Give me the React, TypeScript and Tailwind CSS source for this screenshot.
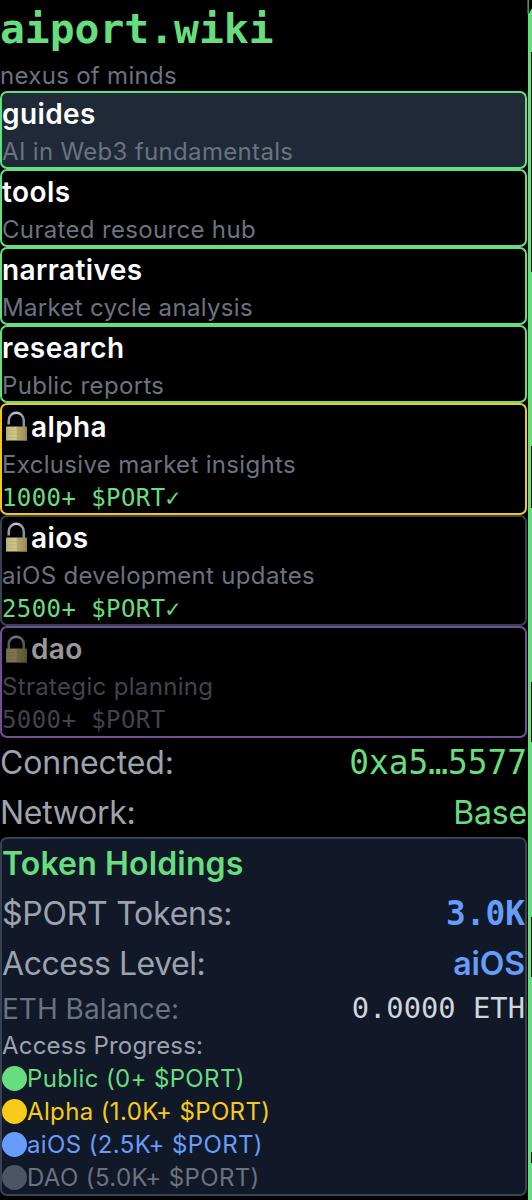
import type { ReactNode } from 'react';

function Lock({ open }: { open: boolean }) {
  return (
    <svg width="29" height="34" viewBox="0 0 29 34" className="mb-[3px] shrink-0">
      <defs>
        <linearGradient id="brass" x1="0" x2="1" y1="0" y2="0">
          <stop offset="0" stopColor="#b5aa72" />
          <stop offset="0.12" stopColor="#c5bb82" />
          <stop offset="0.48" stopColor="#cfc688" />
          <stop offset="0.55" stopColor="#b3a96c" />
          <stop offset="0.85" stopColor="#a1975d" />
          <stop offset="1" stopColor="#8c834f" />
        </linearGradient>
        <linearGradient id="steel" x1="0" x2="1" y1="0" y2="0">
          <stop offset="0" stopColor="#8e9cb0" />
          <stop offset="0.5" stopColor="#c3cad5" />
          <stop offset="1" stopColor="#8290a6" />
        </linearGradient>
      </defs>
      <path
        d={open ? 'M6.7 15.5V11.8C6.7 1.2 21.8 1.2 21.8 11.8V18' : 'M6.7 19V13.2C6.7 3.4 21.8 3.4 21.8 13.2V19'}
        fill="none"
        stroke="url(#steel)"
        strokeWidth="2.5"
      />
      <rect x="4" y="17.5" width="21" height="14.5" rx="0.8" fill="url(#brass)" />
      <path d="M4.5 21.5h20M4.5 25h20M4.5 28.5h20" stroke="#a59b62" strokeOpacity="0.6" strokeWidth="0.6" />
      <path d="M4.3 31.5h20.4" stroke="#70683f" strokeWidth="1" />
    </svg>
  );
}

type CardProps = {
  title: string;
  text: string;
  className: string;
  lock?: 'open' | 'closed';
  children?: ReactNode;
};

function Card({ title, text, className, lock, children }: CardProps) {
  return (
    <div className={`shrink-0 rounded-[7px] border-2 ${className}`}>
      <div className="flex h-[42px] items-center text-[28px] font-semibold tracking-[0.4px] text-white">
        {lock && <Lock open={lock === 'open'} />}
        <span>{title}</span>
      </div>
      <div className="flex h-8 items-center pt-0.5 text-[24px] tracking-[0.33px] text-[#6b7280]">
        <span>{text}</span>
      </div>
      {children}
    </div>
  );
}

function Requirement({ amount, met }: { amount: string; met?: boolean }) {
  return (
    <div className={`flex h-[35px] items-center font-['DejaVu_Sans_Mono'] text-[24px] tracking-[0.42px] ${met ? 'text-[#67de7d]' : 'text-[#6b7280]'}`}>
      <span className="whitespace-pre">{amount}+ $PORT</span>
      {met && <span>✓</span>}
    </div>
  );
}

function Row({ label, labelClass, children }: { label: string; labelClass: string; children: ReactNode }) {
  return (
    <div className="flex h-[50px] items-center justify-between text-[32px]">
      <span className={`text-[#9ca3af] ${labelClass}`}>{label}</span>
      {children}
    </div>
  );
}

function Level({ dot, text, children }: { dot: string; text: string; children: ReactNode }) {
  return (
    <div className={`flex h-[33px] items-center text-[24px] tracking-[0.37px] ${text}`}>
      <span className={`size-[25px] rounded-full ${dot}`} />
      <span>{children}</span>
    </div>
  );
}

function EdgeGlow() {
  return (
    <svg width="5" height="1200" viewBox="0 0 5 1200" className="shrink-0">
      <path d="M0.6 0H1.7V14L5 8V52H4V272H5V446H4V508H5V682H4V742H5V917H4V977H5V1152H4V1163H5V1200H1V14H0.6Z" fill="#67de7d" />
    </svg>
  );
}

export default function App() {
  return (
    <div className="flex h-[1200px] w-[532px] overflow-hidden bg-black font-['Inter',sans-serif] leading-none whitespace-nowrap">
      <aside className="flex w-[527px] shrink-0 flex-col">
        <div className="flex h-[58px] items-center pt-0.5 font-['DejaVu_Sans_Mono'] text-[41.3px] font-bold text-[#67de7d]">aiport.wiki</div>
        <div className="flex h-[33px] items-center pt-0.5 text-[24px] tracking-[0.3px] text-[#6b7280]">
          <span>nexus of minds</span>
        </div>
        <Card title="guides" text="AI in Web3 fundamentals" className="h-[78px] border-[#67de7d] bg-[#1f2937]" />
        <Card title="tools" text="Curated resource hub" className="h-[78px] border-[#67de7d]" />
        <Card title="narratives" text="Market cycle analysis" className="h-[78px] border-[#67de7d]" />
        <Card title="research" text="Public reports" className="h-[78px] border-[#67de7d]" />
        <Card title="alpha" lock="open" text="Exclusive market insights" className="h-[112px] border-[#f5c518] pt-px">
          <Requirement amount="1000" met />
        </Card>
        <Card title="aios" lock="open" text="aiOS development updates" className="h-[111px] border-[#374151]">
          <Requirement amount="2500" met />
        </Card>
        <Card title="dao" lock="closed" text="Strategic planning" className="h-[112px] border-[#c084fc] opacity-60">
          <Requirement amount="5000" />
        </Card>
        <Row label="Connected:" labelClass="tracking-[-0.1px]">
          <span className="font-['DejaVu_Sans_Mono'] text-[32.8px] text-[#67de7d]">0xa5…5577</span>
        </Row>
        <Row label="Network:" labelClass="tracking-[-0.3px]">
          <span className="tracking-[-0.2px] text-[#67de7d]">Base</span>
        </Row>
        <section className="-mt-px rounded-[7px] border-2 border-[#374151] bg-[#111827]">
          <h2 className="flex h-[50px] items-center text-[32px] font-semibold tracking-[0.15px] text-[#67de7d]">Token Holdings</h2>
          <Row label="$PORT Tokens:" labelClass="tracking-[-0.25px]">
            <span className="font-['DejaVu_Sans_Mono'] text-[32.8px] font-bold text-[#669dfc]">3.0K</span>
          </Row>
          <Row label="Access Level:" labelClass="tracking-[-0.45px]">
            <span className="font-semibold tracking-[-0.1px] text-[#669dfc]">aiOS</span>
          </Row>
          <div className="flex h-10 items-center justify-between pb-px text-[28px] text-[#6b7280]">
            <span>ETH Balance:</span>
            <span className="font-['DejaVu_Sans_Mono'] text-[28.8px] text-[#d1d5db]">0.0000 ETH</span>
          </div>
          <div className="flex h-[33px] items-center text-[24px] tracking-[0.2px] text-[#9ca3af]">
            <span>Access Progress:</span>
          </div>
          <Level dot="bg-[#67de7d]" text="text-[#67de7d]">Public (0+ $PORT)</Level>
          <Level dot="bg-[#f8cb18]" text="text-[#f8cb18]">Alpha (1.0K+ $PORT)</Level>
          <Level dot="bg-[#669dfc]" text="text-[#669dfc]">aiOS (2.5K+ $PORT)</Level>
          <Level dot="bg-[#4b5563]" text="text-[#6b7280]">DAO (5.0K+ $PORT)</Level>
        </section>
      </aside>
      <EdgeGlow />
    </div>
  );
}
